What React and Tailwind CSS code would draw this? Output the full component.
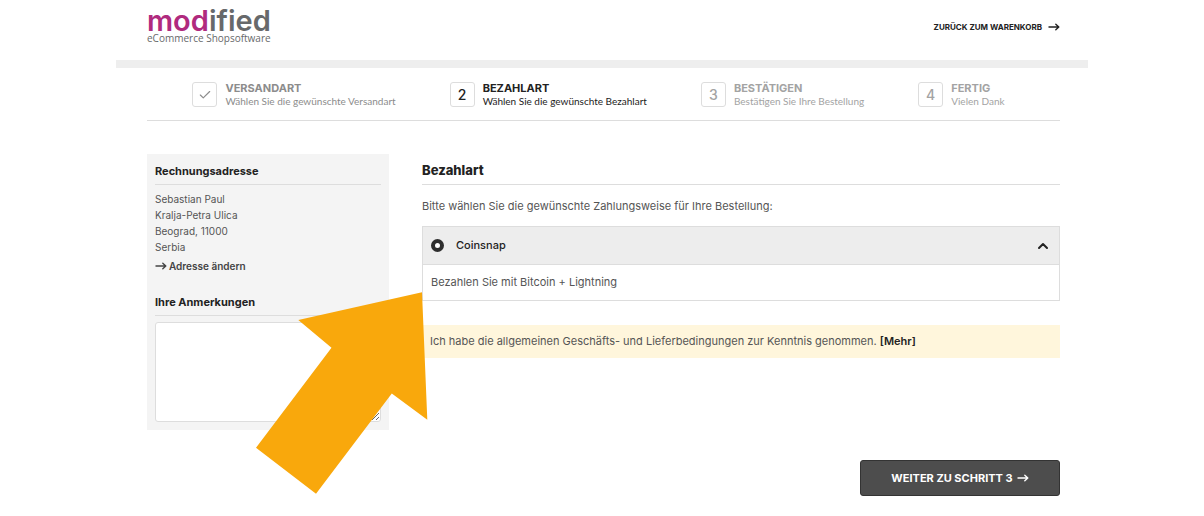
import React from 'react';
import { Check, ChevronUp } from 'lucide-react';

const steps = [
  { nr: 1, title: 'VERSANDART', text: 'Wählen Sie die gewünschte Versandart', status: 'done' },
  { nr: 2, title: 'BEZAHLART', text: 'Wählen Sie die gewünschte Bezahlart', status: 'active' },
  { nr: 3, title: 'BESTÄTIGEN', text: 'Bestätigen Sie Ihre Bestellung', status: 'open' },
  { nr: 4, title: 'FERTIG', text: 'Vielen Dank', status: 'open' },
];

const stepColors = {
  done: 'text-[#8c8c8c]',
  active: 'text-[#222222]',
  open: 'text-[#a3a3a3]',
};

function ArrowIcon({ className = '' }) {
  return (
    <svg
      viewBox="0 0 12 10"
      className={`h-[10px] w-3 shrink-0 ${className}`}
      fill="none"
      stroke="currentColor"
      strokeWidth="1.4"
      strokeLinecap="round"
      strokeLinejoin="round"
      aria-hidden="true"
    >
      <path d="M1 5h9.5M7.8 2.2 10.8 5 7.8 7.8" />
    </svg>
  );
}

function Logo() {
  return (
    <a href="#" className="flex flex-col text-[#67696b]">
      <span className="text-[29px] leading-6 font-semibold">
        <span className="text-[#b02a7e]">mod</span>ified
      </span>
      <span className="font-['Open_Sans',sans-serif] text-[10px] leading-[10px]">
        eCommerce Shopsoftware
      </span>
    </a>
  );
}

function Step({ step }) {
  return (
    <li className={`flex items-center gap-2 ${stepColors[step.status]}`}>
      <span className="flex h-[25px] w-[25px] shrink-0 items-center justify-center rounded-[3px] border border-[#dddddd] text-sm font-medium">
        {step.status === 'done' ? <Check className="h-[14px] w-[14px]" aria-hidden="true" /> : step.nr}
      </span>
      <span className="flex flex-col whitespace-nowrap">
        <span className="text-[11px] leading-[14px] font-bold">{step.title}</span>
        <span className="font-[Lato,sans-serif] text-[10px] leading-[13px]">{step.text}</span>
      </span>
    </li>
  );
}

function Sidebar() {
  return (
    <aside className="w-[242px] shrink-0 bg-[#f4f4f4] p-2 text-[10px] text-[#555555]">
      <h2 className="border-b border-[#dddddd] pt-[1px] pb-[5px] text-[11px] leading-4 font-bold text-[#222222]">
        Rechnungsadresse
      </h2>
      <address className="pt-[6px] leading-4 not-italic">
        Sebastian Paul<br />
        Kralja-Petra Ulica<br />
        Beograd, 11000<br />
        Serbia
      </address>
      <a href="#" className="mt-[3px] flex items-center gap-[2px] leading-4 font-semibold text-[#444444]">
        <ArrowIcon /> Adresse ändern
      </a>
      <label
        htmlFor="comments"
        className="mt-5 block border-b border-[#dddddd] pb-[5px] text-[11px] leading-4 font-bold text-[#222222]"
      >
        Ihre Anmerkungen
      </label>
      <textarea
        id="comments"
        className="mt-[6px] block h-[100px] w-full rounded-[3px] border border-[#dddddd] bg-white p-2"
      />
    </aside>
  );
}

function Payment() {
  return (
    <form className="flex min-w-0 flex-1 flex-col text-[11px] text-[#555555]" onSubmit={e => e.preventDefault()}>
      <h1 className="border-b border-[#dddddd] pt-2 pb-[5px] text-[13px] leading-[17px] font-extrabold text-[#222222]">
        Bezahlart
      </h1>
      <p className="mt-[13px] leading-4">Bitte wählen Sie die gewünschte Zahlungsweise für Ihre Bestellung:</p>

      <div className="mt-3 border border-[#dddddd]">
        <label className="flex h-[38px] items-center gap-3 border-b border-[#dddddd] bg-[#ededed] px-2 font-medium text-[#222222]">
          <input
            type="radio"
            name="payment"
            defaultChecked
            className="h-[13px] w-[13px] appearance-none rounded-full border-4 border-[#2e2e2e] bg-white"
          />
          Coinsnap
          <ChevronUp className="ml-auto h-4 w-4" strokeWidth={3} aria-hidden="true" />
        </label>
        <p className="px-2 py-[9px] leading-[17px]">Bezahlen Sie mit Bitcoin + Lightning</p>
      </div>

      <p className="mt-6 bg-[#fff6dc] px-2 py-2 leading-[17px]">
        Ich habe die allgemeinen Geschäfts- und Lieferbedingungen zur Kenntnis genommen.{' '}
        <a href="#" className="font-semibold text-[#222222]">[Mehr]</a>
      </p>

      <button
        type="submit"
        className="mt-[102px] flex h-9 w-[200px] items-center justify-center gap-1 self-end rounded-[3px] border border-[#333333] bg-[#4d4d4d] text-[11px] font-bold text-white"
      >
        WEITER ZU SCHRITT 3 <ArrowIcon />
      </button>
    </form>
  );
}

export default function App() {
  return (
    <div className="mx-auto max-w-[972px] bg-white font-[Inter,sans-serif]">
      <header className="flex h-[60px] items-start justify-between pt-[9px] pr-7 pl-[31px]">
        <Logo />
        <a href="#" className="mt-[10px] flex items-center gap-[6px] text-[8px] leading-4 font-bold text-[#222222]">
          ZURÜCK ZUM WARENKORB <ArrowIcon />
        </a>
      </header>
      <div className="h-2 bg-[#eeeeee]" />

      <div className="pr-7 pl-[31px]">
        <ol className="flex justify-center gap-[54px] border-b border-[#dddddd] pt-[13px] pr-[10px] pb-3">
          {steps.map(s => (
            <Step key={s.nr} step={s} />
          ))}
        </ol>

        <main className="relative mt-[33px] flex items-start gap-[33px]">
          <Sidebar />
          <Payment />
          <svg
            viewBox="0 0 172 202"
            className="pointer-events-none absolute top-[138px] left-[109px] h-[202px] w-[172px]"
            aria-hidden="true"
          >
            <path d="M166 0.3 42.3 28 75.5 55.8 0 155.8 60 201.7 135.8 101.5 171.3 127.8Z" fill="#f9a80c" />
          </svg>
        </main>
      </div>
    </div>
  );
}
